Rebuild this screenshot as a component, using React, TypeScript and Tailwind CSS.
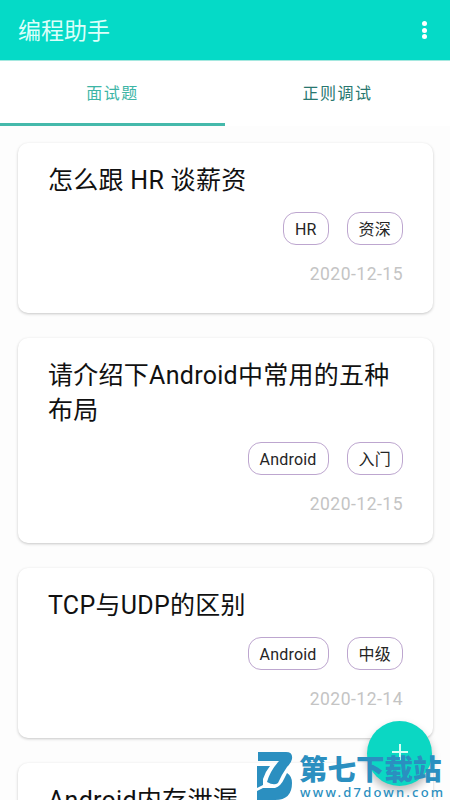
import React from 'react';

type Question = { title: string; tags: string[]; date: string };

const questions: Question[] = [
  { title: '怎么跟 HR 谈薪资', tags: ['HR', '资深'], date: '2020-12-15' },
  { title: '请介绍下Android中常用的五种布局', tags: ['Android', '入门'], date: '2020-12-15' },
  { title: 'TCP与UDP的区别', tags: ['Android', '中级'], date: '2020-12-14' },
  { title: 'Android内存泄漏', tags: [], date: '' },
];

function Card({ title, tags, date }: Question) {
  return (
    <article className="shrink-0 rounded-[10px] bg-white pt-[20px] pr-[30px] pb-[27px] pl-[30px] shadow-[0_1px_3px_rgba(0,0,0,0.22)]">
      <h2 className="mr-[-4px] text-[25px] leading-[35px] tracking-[0.28px] text-[#111]">{title}</h2>
      {tags.length > 0 && (
        <div className="mt-[14px] flex justify-end gap-[18px]">
          {tags.map((tag) => (
            <span
              key={tag}
              className="flex h-[33px] items-center rounded-[13px] border-[1.5px] border-[#bda6cf] px-[11px] pt-[2px] text-base tracking-[0.2px] text-[#252525]"
            >
              {tag}
            </span>
          ))}
        </div>
      )}
      {date && (
        <time className="mt-[17px] block text-right text-[17.5px] leading-6 tracking-[0.5px] text-[#c4c4c4]">{date}</time>
      )}
    </article>
  );
}

function Watermark() {
  return (
    <div className="absolute top-[751px] left-[256px] flex h-[49px] w-[190px] text-[#2b8fc0]">
      <svg className="h-[49px] w-[38px] shrink-0" viewBox="0 0 38 49" fill="currentColor" aria-hidden="true">
        <path d="M2 1H30Q37 1 36 8Q35 12 31 16Q26 23 22 32Q18 35 11 31Q14 20 23 10H2Z" />
        <path d="M1 15H14Q9 21 7 28V34L1 37Z" />
        <path d="M1 40L7 37H19Q25 35 28 28L31 22Q36 25 36 32Q36 49 19 49H1Z" />
      </svg>
      <div className="flex flex-col pt-[4px] pl-[5px]">
        <span className="h-[29px] whitespace-nowrap text-[28.5px] leading-[31px] font-black">第七下载站</span>
        <span className="whitespace-nowrap pl-px font-['Noto_Sans'] text-[13px] leading-[16px] font-medium tracking-[2.2px]">www.d7down.com</span>
      </div>
    </div>
  );
}

export default function App() {
  return (
    <main className="relative flex h-[800px] w-[450px] flex-col overflow-hidden bg-[#fdfdfd] font-[Roboto,'Noto_Sans_CJK_SC',sans-serif]">
      <header className="flex h-[60px] shrink-0 items-center justify-between bg-[#05dac7] pr-[23px] pl-[18px] text-white">
        <h1 className="pt-[3px] text-[23px] leading-8 text-[#dcfffa]">编程助手</h1>
        <button aria-label="更多" className="flex flex-col gap-[1.5px]">
          <span className="size-[5px] rounded-full bg-white" />
          <span className="size-[5px] rounded-full bg-white" />
          <span className="size-[5px] rounded-full bg-white" />
        </button>
      </header>
      <nav className="grid h-[66px] shrink-0 grid-cols-2 border-t border-[#a5e8df] bg-white text-base tracking-[1.5px]">
        <button className="flex items-center justify-center border-b-[3px] border-[#45b9ab] pt-[4px] text-[#3db5a6]">面试题</button>
        <button className="flex items-center justify-center border-b-[3px] border-transparent pt-[4px] text-[#28776f]">正则调试</button>
      </nav>
      <section className="flex min-h-0 flex-1 flex-col gap-[25px] overflow-hidden pt-[17px] pr-[17px] pl-[18px]">
        {questions.map((question) => (
          <Card key={question.title} {...question} />
        ))}
      </section>
      <button
        aria-label="添加"
        className="absolute top-[721px] left-[367px] flex size-[65px] items-center justify-center rounded-full bg-[#0bd7c3] pb-1 shadow-[0_5px_8px_rgba(0,0,0,0.28)]"
      >
        <svg className="size-4" viewBox="0 0 16 16" fill="none" stroke="#d7fff5" strokeWidth="2">
          <path d="M8 0V16M0 8H16" />
        </svg>
      </button>
      <Watermark />
    </main>
  );
}
